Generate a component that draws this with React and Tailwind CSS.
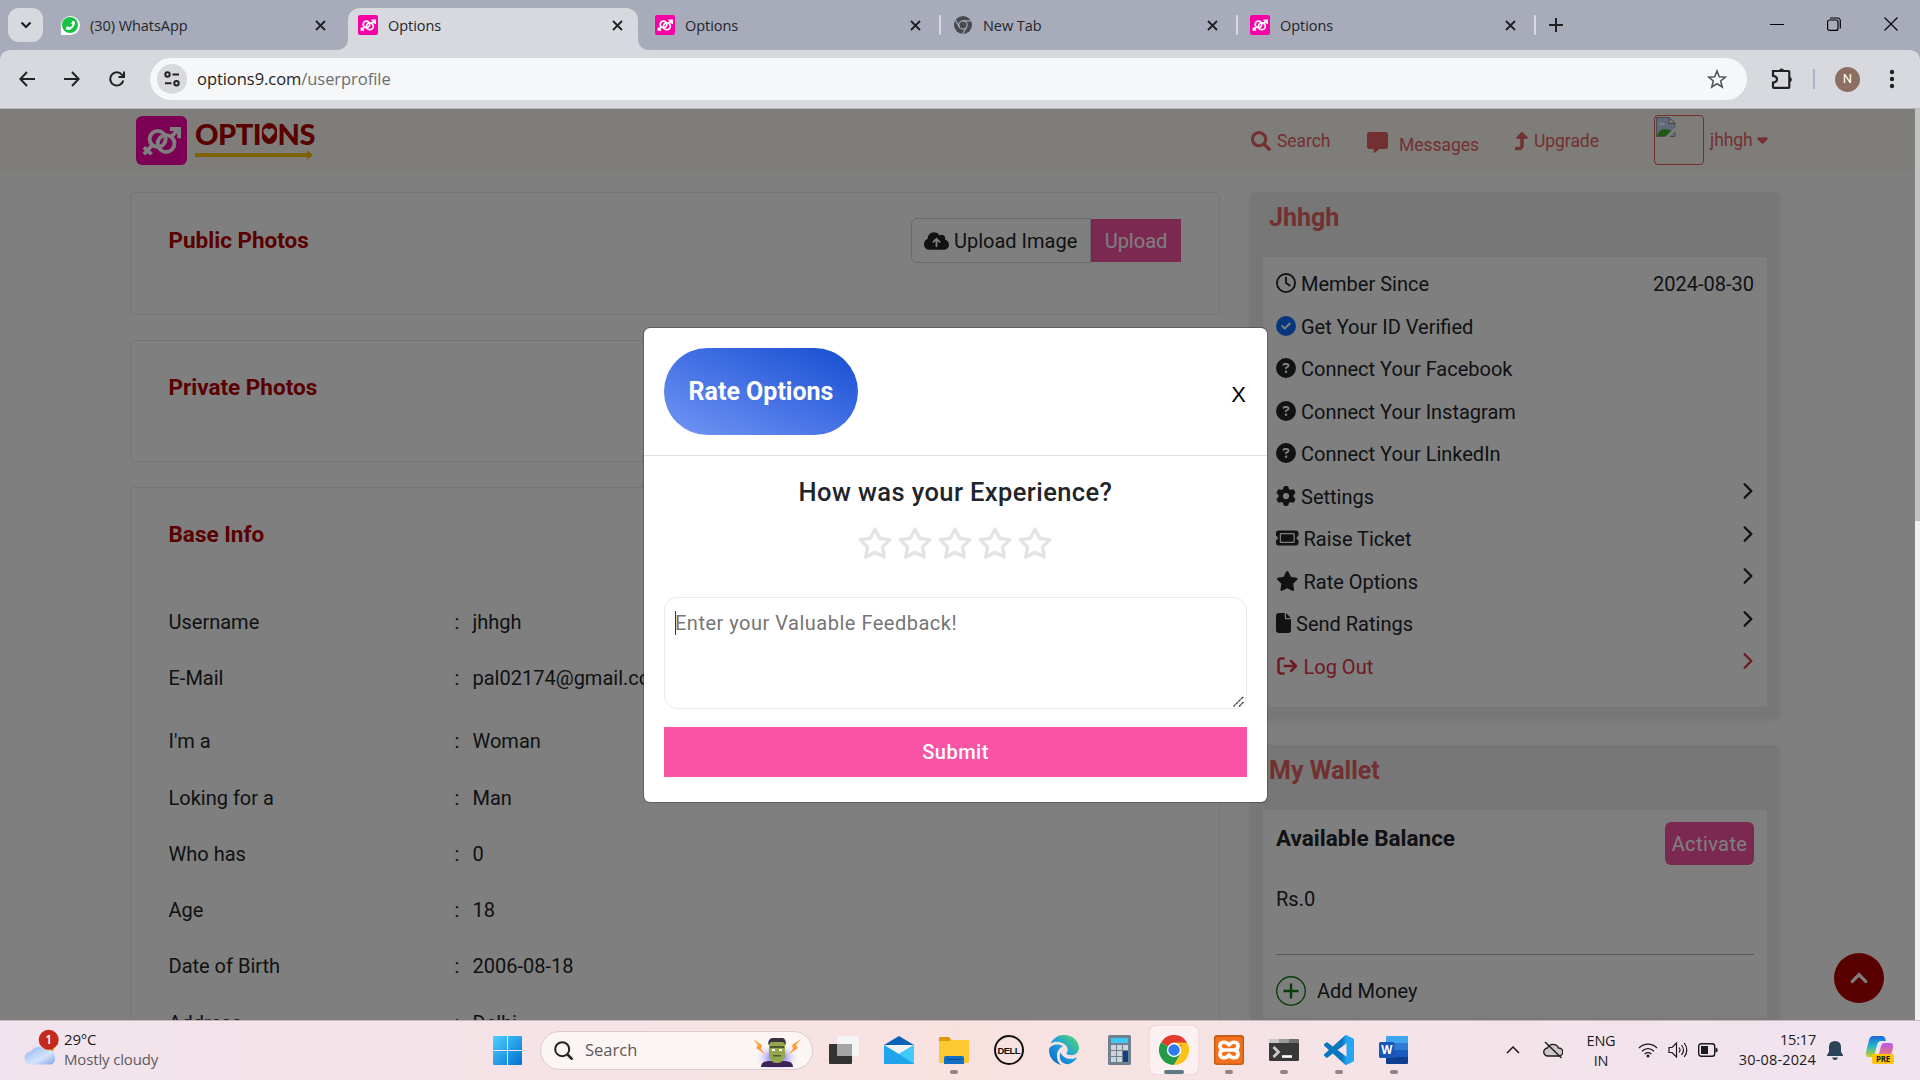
import React from "react";
import {
  FaMessage, FaTurnUp, FaCaretDown, FaCloudArrowUp, FaRegClock, FaCircleCheck,
  FaCircleQuestion, FaGear, FaTicket, FaStar, FaFile, FaArrowRightFromBracket, FaEdge, FaPhone,
} from "react-icons/fa6";
import { FaSearch, FaChevronUp } from "react-icons/fa";
import { BsChevronRight } from "react-icons/bs";

function Genders({ className, stroke = 4 }) {
  return (
    <svg viewBox="0 0 64 64" className={className} fill="none" stroke="currentColor" strokeWidth={stroke}>
      <circle cx="27" cy="30" r="10.5" />
      <circle cx="38" cy="36" r="11" />
      <path d="M20 38 9 50M9 41l10 9" />
      <path d="M45 27 54 17M43 17h12v12" />
    </svg>
  );
}

function Favicon() {
  return (
    <span className="flex size-5 items-center justify-center rounded-[2px] bg-[#f800a6] text-white">
      <Genders className="size-5" stroke={5.5} />
    </span>
  );
}

function ChromeGray() {
  return (
    <svg viewBox="0 0 20 20" className="size-[18px]">
      <circle cx="10" cy="10" r="10" fill="#474a4f" />
      <g stroke="#a8abb9" strokeWidth="1.3" fill="none">
        <path d="M10 5.4h9M6 12.3 1.6 4.6M14 12.3l-4.6 8" />
        <circle cx="10" cy="10" r="4.6" />
      </g>
    </svg>
  );
}

function WhatsApp() {
  return (
    <span className="flex size-[19px] items-center justify-center rounded-full rounded-bl-[4px] bg-white">
      <span className="flex size-[16px] items-center justify-center rounded-full bg-[#16c144]">
        <FaPhone className="size-[9px] -scale-x-100 text-white" />
      </span>
    </span>
  );
}

function Close({ className }) {
  return (
    <svg viewBox="0 0 11 11" className={className} fill="none" stroke="#1f2023" strokeWidth="1.8">
      <path d="m1 1 9 9M10 1 1 10" />
    </svg>
  );
}

function Tab({ icon, title, width, active, sep }) {
  return (
    <div className={"relative flex h-[42px] items-center pb-2 " + width + (active ? " rounded-t-[12px] bg-[#d8d9de]" : "")}>
      <span className="flex w-5 justify-center">{icon}</span>
      <span className="ml-[10px] mt-[2px] flex-1 text-[14.500px] tracking-[-0.050px] text-[#24262b]">{title}</span>
      <Close className="size-[11px]" />
      {sep && <span className="absolute -right-[20px] top-[7px] h-5 w-[2px] rounded bg-[#d8d9de]" />}
    </div>
  );
}

function TabStrip() {
  return (
    <div className="flex h-[50px] items-start bg-[#a8abb9] pt-2">
      <div className="ml-2 flex h-[34px] w-[35px] items-center justify-center rounded-[11px] bg-[#d8d9de]">
        <svg viewBox="0 0 12 8" className="h-[8px] w-[12px]" fill="none" stroke="#1f2023" strokeWidth="2.2"><path d="m1.5 1.5 4.5 4.5 4.5-4.5" /></svg>
      </div>
      <Tab icon={<WhatsApp />} title="(30) WhatsApp" width="ml-[17px] w-[266px]" />
      <svg viewBox="0 0 12 12" className="ml-[10px] size-3 self-end"><path d="M12 0v12H0Q12 12 12 0" fill="#d8d9de" /></svg>
      <Tab icon={<Favicon />} title="Options" width="w-[290px] pl-[10px] pr-[15px]" active />
      <svg viewBox="0 0 12 12" className="size-3 self-end"><path d="M0 0v12h12Q0 12 0 0" fill="#d8d9de" /></svg>
      <Tab icon={<Favicon />} title="Options" width="ml-[5px] w-[266px]" sep />
      <Tab icon={<ChromeGray />} title="New Tab" width="ml-[32px] w-[265px]" sep />
      <Tab icon={<Favicon />} title="Options" width="ml-[32px] w-[266px]" sep />
      <svg viewBox="0 0 14 14" className="ml-[33px] mt-[10px] size-[14px]" fill="none" stroke="#1f2023" strokeWidth="2"><path d="M7 0v14M0 7h14" /></svg>
      <div className="ml-auto mr-[22px] mt-[9px] flex items-center gap-[43px] text-black">
        <svg viewBox="0 0 14 14" className="size-[14px]" fill="none" stroke="currentColor"><path d="M0 7.500h14" /></svg>
        <svg viewBox="0 0 14 14" className="size-[14px]" fill="none" stroke="currentColor" strokeWidth="1.2"><rect x=".6" y="3" width="10.4" height="10.4" rx="2" /><path d="M3 1h7q3.300 0 3.300 3v7.500" /></svg>
        <svg viewBox="0 0 14 14" className="size-[14px]" fill="none" stroke="currentColor" strokeWidth="1.1"><path d="m.5.5 13 13M13.500.5l-13 13" /></svg>
      </div>
    </div>
  );
}

function Toolbar() {
  return (
    <div className="bg-[#a8abb9]">
      <div className="flex h-[59px] items-center rounded-t-[10px] border-b border-[#b3b5ba] bg-[#d8d9de] pl-[19px] text-[#202124]">
        <svg viewBox="0 0 16 16" className="size-4" fill="none" stroke="currentColor" strokeWidth="2"><path d="M16 8H1.500M8 1 1.300 8 8 15" /></svg>
        <svg viewBox="0 0 16 16" className="ml-[29px] size-4" fill="none" stroke="currentColor" strokeWidth="2"><path d="M0 8h14.500M8 1l6.700 7L8 15" /></svg>
        <svg viewBox="0 0 16 16" className="ml-[29px] size-4" fill="none" stroke="currentColor" strokeWidth="2"><path d="M14.300 9.500A6.600 6.600 0 1 1 13 3.800L14.800 6M15 .5V6H9.500" /></svg>
        <div className="ml-[25px] flex h-[42px] w-[1597px] items-center rounded-full bg-[#f5f7f9] pl-[7px]">
          <span className="flex size-[30px] items-center justify-center rounded-full bg-[#d8d9de]">
            <svg viewBox="0 0 16 16" className="size-4" fill="none" stroke="#202124" strokeWidth="2"><circle cx="3.500" cy="3.500" r="2.200" /><path d="M8.500 3.500H15M1 12.300h6.500" /><circle cx="12.500" cy="12.300" r="2.200" /></svg>
          </span>
          <span className="ml-[10px] mt-[1px] text-[16.500px] tracking-[-0.05px] text-[#1d1f23]">options9.com<span className="text-[#6b6e73]">/userprofile</span></span>
          <svg viewBox="0 0 20 20" className="ml-auto mr-5 size-5" fill="none" stroke="#55575b" strokeWidth="1.600"><path d="m10 2 2.300 5.700 6 .4-4.600 3.900 1.500 6-5.200-3.300L4.800 18l1.500-6-4.600-3.900 6-.4z" /></svg>
        </div>
        <svg viewBox="0 0 22 22" className="-mt-[2px] ml-[24px] size-[22px]" fill="none" stroke="#202124" strokeWidth="2.200"><path d="M2 4h15.500q.8 0 .8.800V20q0 .8-.8.800H3q-1 0-1-.8v-4.500q4-.5 4-3.300T2 8.800z" /><path d="M8 4a2.500 2.500 0 0 1 5 0zM18.300 10a2.500 2.500 0 0 1 0 5z" fill="#202124" stroke="none" /></svg>
        <span className="ml-[20px] h-5 w-[2px] bg-[#a9b3ca]" />
        <span className="ml-[20px] flex size-[25px] items-center justify-center rounded-full bg-[#8d6e63] font-['Roboto'] text-[13px] text-white">N</span>
        <svg viewBox="0 0 6 20" className="ml-[29px] h-5 w-[6px]" fill="#202124"><circle cx="3" cy="3" r="2.200" /><circle cx="3" cy="10" r="2.200" /><circle cx="3" cy="17" r="2.200" /></svg>
      </div>
    </div>
  );
}

function SiteNav() {
  return (
    <div className="flex h-[63px] items-start bg-[#fffbf5] pl-[136px] text-[17.500px] leading-[27px] tracking-[-0.050px] text-[#e66163]">
      <div className="mt-[7px] flex h-[49px] w-[51px] items-center justify-center rounded-[6px] bg-[#f800a6] text-white">
        <Genders className="size-[49px]" stroke={5} />
      </div>
      <div className="ml-[8px] mt-[12px] w-[120px] text-[#b30000]">
        <div className="flex h-[25px] items-center font-['Lato'] text-[29px] font-black leading-[25px] tracking-[-0.5px]">
          OPTI
          <span className="mx-[1px] flex h-[21px] w-[18px] items-center justify-center rounded-full bg-[#b30000]">
            <svg viewBox="0 0 12 11" className="h-[11px] w-3" fill="#fffbf5"><path d="M6 11 1 5.500C-1.500 2 3-2 6 1.500 9-2 13.500 2 11 5.500z" /></svg>
          </span>
          NS
        </div>
        <svg viewBox="0 0 118 10" className="mt-[4px] h-[10px] w-[118px]" fill="#f8c400"><path d="M0 3h112V0l6 5-6 5V7H0z" /></svg>
      </div>
      <div className="ml-auto mr-[144px] flex items-start">
        <FaSearch className="mt-[22px] size-[20px]" />
        <span className="ml-[6px] mt-[19px] w-[90px] whitespace-nowrap">Search</span>
        <FaMessage className="mt-[23px] size-[21px]" />
        <span className="ml-[11px] mt-[23px] w-[116px] whitespace-nowrap">Messages</span>
        <FaTurnUp className="mt-[22px] h-[20px] w-[14px]" />
        <span className="ml-[5px] mt-[19px] w-[120px] whitespace-nowrap">Upgrade</span>
        <span className="mt-[6px] flex size-[50px] items-start rounded-[4px] border border-[#e66163]">
          <svg viewBox="0 0 20 20" className="ml-[1px] mt-[1px] size-5"><path d="M.5.500h12.500l6 6V19.500H.5z" fill="#c3d4f4" stroke="#999" /><path d="M13 .5v6h6z" fill="#fff" stroke="#888" /><path d="M1 19q2-7 8-7 4 0 8 3l-4 4z" fill="#3fae2a" /><path d="M3 8q1-3 3-2 2-1 3 2z" fill="#fff" /><path d="M20 9.500 9 20h4l7-6.500z" fill="#fffbf5" /></svg>
        </span>
        <span className="ml-[6px] mt-[18px] w-[44px]">jhhgh</span>
        <FaCaretDown className="mt-[22px] size-[17px]" />
      </div>
    </div>
  );
}

const INFO = [
  ["Username", "jhhgh", "h-[56px]"],
  ["E-Mail", "pal02174@gmail.com", "h-[63px]"],
  ["I'm a", "Woman", "h-[57px]"],
  ["Loking for a", "Man", "h-[56px]"],
  ["Who has", "0", "h-[56px]"],
  ["Age", "18", "h-[56px]"],
  ["Date of Birth", "2006-08-18", "h-[57px]"],
  ["Address", "Delhi", "h-[56px]"],
];

function MainColumn() {
  const card = "rounded-[4px] border border-[#ebebeb] pl-[37.500px] ";
  const title = "text-[22.500px] font-bold leading-[30px] text-[#b30000]";
  return (
    <div className="flex w-[1090px] flex-col">
      <section className={card + "flex h-[123px] items-start justify-between pr-[38px]"}>
        <h2 className={title + " mt-[32px]"}>Public Photos</h2>
        <div className="mt-[25px] flex items-center text-[20px]">
          <span className="flex h-[45px] w-[180px] items-center rounded-l-[6px] border border-[#ced4da] pl-[12px] text-[#212529]">
            <FaCloudArrowUp className="h-[20px] w-[25px]" />
            <span className="ml-[5px] whitespace-nowrap">Upload Image</span>
          </span>
          <span className="flex h-[43px] w-[90px] items-center justify-center bg-[#f853a4] text-white">Upload</span>
        </div>
      </section>
      <section className={card + "mt-[25px] h-[122px]"}>
        <h2 className={title + " mt-[31px]"}>Private Photos</h2>
      </section>
      <section className={card + "mt-[25px] h-[700px]"}>
        <h2 className={title + " mt-[31px]"}>Base Info</h2>
        <div className="mt-[58px] text-[20px] leading-[30px]">
          {INFO.map(([k, v, h]) => (
            <div key={k} className={"flex " + h}>
              <span className="w-[286px]">{k}</span>
              <span className="w-[18px]">:</span>
              <span>{v}</span>
            </div>
          ))}
        </div>
      </section>
    </div>
  );
}

const MENU = [
  [<FaCircleQuestion className="size-5" />, "Connect Your Facebook"],
  [<FaCircleQuestion className="size-5" />, "Connect Your Instagram"],
  [<FaCircleQuestion className="size-5" />, "Connect Your LinkedIn"],
  [<FaGear className="size-5" />, "Settings", true],
  [<FaTicket className="h-5 w-[22.500px]" />, "Raise Ticket", true],
  [<FaStar className="h-5 w-[22.500px]" />, "Rate Options", true],
  [<FaFile className="h-5 w-[15px]" />, "Send Ratings", true],
];

function MenuRow({ icon, label, chevron, right, color = "" }) {
  return (
    <div className={"flex h-[42.500px] items-start leading-[30px] " + color}>
      <span className="mt-[4px] flex">{icon}</span>
      <span className="ml-[5px]">{label}</span>
      {right && <span className="ml-auto">{right}</span>}
      {chevron && <BsChevronRight className="-mr-[3px] ml-auto mt-[0.500px] size-[18px]" strokeWidth="1" />}
    </div>
  );
}

function SideColumn() {
  const card = "rounded-[6px] bg-[#eeeeee] px-[13px] shadow-[0_2px_10px_rgba(0,0,0,0.06)] ";
  const title = "pl-[6px] text-[25px] font-bold leading-[30px] text-[#e66163]";
  return (
    <div className="ml-[30px] flex w-[530px] flex-col">
      <section className={card + "h-[527px] pt-[11px]"}>
        <h2 className={title}>Jhhgh</h2>
        <div className="mt-[24px] h-[450px] bg-white px-[13px] pt-[12px] text-[20px]">
          <MenuRow icon={<FaRegClock className="size-5" />} label="Member Since" right="2024-08-30" />
          <MenuRow icon={<FaCircleCheck className="size-5 text-[#0d6efd]" />} label="Get Your ID Verified" />
          {MENU.map(([i, l, c]) => <MenuRow key={l} icon={i} label={l} chevron={c} />)}
          <MenuRow icon={<FaArrowRightFromBracket className="h-5 w-[22.500px]" />} label="Log Out" chevron color="text-[#dc3545]" />
        </div>
      </section>
      <section className={card + "mt-[26px] h-[400px] pt-[11px]"}>
        <h2 className={title}>My Wallet</h2>
        <div className="mt-[24px] h-[208px] bg-white px-[13px] pt-[12px] text-[20px]">
          <div className="flex h-[43px] items-start justify-between">
            <h3 className="mt-[1px] text-[22.500px] font-bold leading-[30px]">Available Balance</h3>
            <span className="flex h-[43px] w-[89px] items-center justify-center rounded-[6px] bg-[#f853a4] tracking-[0.4px] text-white">Activate</span>
          </div>
          <div className="mt-[19px] leading-[30px]">Rs.0</div>
          <div className="mt-[40px] h-[1px] bg-[#b4b5b6]" />
          <div className="mt-[21px] flex items-center">
            <svg viewBox="0 0 30 30" className="size-[30px]" fill="none" stroke="#0f7d0f"><circle cx="15" cy="15" r="14.300" strokeWidth="1.400" /><path d="M15 7.500v15M7.500 15h15" strokeWidth="2.400" /></svg>
            <span className="ml-[11px] leading-[30px]">Add Money</span>
          </div>
        </div>
      </section>
    </div>
  );
}

function RatingStar() {
  return (
    <svg viewBox="0 0 36 34" className="h-[34px] w-[36px]" fill="none" stroke="currentColor" strokeWidth="3.400" strokeLinejoin="round">
      <path d="m18 3 4.600 9.300 10.200 1.500-7.400 7.200 1.800 10.100L18 26.300l-9.200 4.800 1.800-10.100-7.400-7.200 10.200-1.500z" />
    </svg>
  );
}

function Modal() {
  return (
    <div className="flex h-[474px] w-[623px] flex-col rounded-[6px] bg-white text-[#212529] shadow-[0_0_0_1px_rgba(0,0,0,0.25)]">
      <div className="flex h-[128px] items-center justify-between border-b border-[#dee2e6] pl-5 pr-[21px]">
        <span className="flex h-[87px] w-[194px] items-center justify-center rounded-full bg-linear-to-tr from-[#7296f4] via-[#4471e4] to-[#144cd2] text-[25px] font-bold text-white">
          Rate Options
        </span>
        <span className="mt-[6px] font-['Liberation_Sans'] text-[22px] leading-none text-black">X</span>
      </div>
      <h2 className="mt-[21px] text-center text-[25.500px] font-medium leading-[30px] tracking-[0.400px]">How was your Experience?</h2>
      <div className="mt-[18px] flex h-[36px] items-center justify-center gap-[4px] pr-[1px] text-[#e4e4e4]">
        {[0, 1, 2, 3, 4].map((n) => <RatingStar key={n} />)}
      </div>
      <div className="relative mx-5 mt-[36px] h-[112px] rounded-[13px] border border-[#e9e9e9] pl-[10px] pt-[11px] text-[20px] leading-[28px] tracking-[0.500px] text-[#757575]">
        Enter your Valuable Feedback!
        <span className="absolute left-[10px] top-[13px] h-6 w-[1px] bg-[#b30000]" />
        <svg viewBox="0 0 11 11" className="absolute bottom-[1px] right-[2px] size-[11px]" fill="none" stroke="#444" strokeWidth="1.300"><path d="m.5 10.500 10-10M6 10.500l4.500-4.500" strokeDasharray="3 .5" /></svg>
      </div>
      <div className="mx-5 mt-[18px] flex h-[50px] items-center justify-center bg-[#f853a4] text-[20px] font-medium tracking-[0.500px] text-white">Submit</div>
    </div>
  );
}

function Page() {
  return (
    <div className="flex h-[911px]">
      <div className="relative w-[1915px] overflow-hidden bg-white font-['Roboto',sans-serif] text-[#212529]">
        <SiteNav />
        <div className="flex pl-[130px] pt-[20px]">
          <MainColumn />
          <SideColumn />
        </div>
        <div className="absolute left-[1834px] top-[844px] flex size-[50px] items-center justify-center rounded-full bg-[#b30000] text-white">
          <FaChevronUp className="size-5" />
        </div>
        <div className="absolute inset-0 flex items-start justify-center bg-black/50 pr-[4px] pt-[219px]">
          <Modal />
        </div>
      </div>
      <div className="w-[5px] bg-[#f1f1f1]"><div className="h-[412px] bg-[#c1c1c1]" /></div>
    </div>
  );
}

function Weather() {
  return (
    <div className="flex w-[250px] items-center pl-6">
      <svg viewBox="0 0 36 38" className="-mt-[6px] h-[38px] w-[36px]">
        <defs><linearGradient id="cl" x1="0" y1="0" x2="1" y2="1"><stop offset="0" stopColor="#8db0ee" /><stop offset=".6" stopColor="#d5e4fb" /><stop offset="1" stopColor="#7ea3e8" /></linearGradient></defs>
        <circle cx="25" cy="20" r="5" fill="#f08a20" />
        <path d="M7 36.500a6.500 6.500 0 0 1 0-13 9 9 0 0 1 15-1.500 7 7 0 0 1 9 7.500 6 6 0 0 1-4 7z" fill="url(#cl)" />
        <circle cx="24.700" cy="11.700" r="10" fill="#c42b1c" />
        <text x="24.700" y="16" textAnchor="middle" fontSize="12" fontWeight="600" fill="#fff" fontFamily="Open Sans">1</text>
      </svg>
      <div className="-mt-[2px] ml-[4px] text-[15px] leading-[20px] text-[#1b1b1b]">
        <div className="tracking-[-0.200px]">29°C</div>
        <div className="tracking-[-0.150px] text-[#5d5a5e]">Mostly cloudy</div>
      </div>
    </div>
  );
}

function Slot({ children, open, active }) {
  return (
    <div className={"relative flex h-12 w-12 items-center justify-center rounded-[5px] " + (active ? "bg-[#fcf1f0] shadow-[0_0_1px_rgba(0,0,0,0.3)]" : "")}>
      {children}
      {open && <span className="absolute bottom-0 left-5 h-[4px] w-2 rounded-full bg-[#8f8586]" />}
      {active && <span className="absolute bottom-0 left-[14px] h-[4px] w-5 rounded-full bg-[#5f7886]" />}
    </div>
  );
}

function Taskbar() {
  return (
    <div className="flex h-[60px] items-center border-t border-[#c9b9bc] bg-linear-to-r from-[#f1e4ee] via-[#f8e2e0] to-[#f0e4f0] pb-[1px]">
      <Weather />
      <svg viewBox="0 0 29 29" className="ml-[243px] size-[29px]">
        <defs><linearGradient id="wn" x1="0" y1="0" x2="1" y2="1"><stop offset="0" stopColor="#4fd0ff" /><stop offset="1" stopColor="#0070d0" /></linearGradient></defs>
        <path d="M1 0h13v14H0V1q0-1 1-1M15 0h13q1 0 1 1v13H15zM0 15h14v14H1q-1 0-1-1zM15 15h14v13q0 1-1 1H15z" fill="url(#wn)" />
      </svg>
      <div className="ml-[18px] flex h-[39px] w-[273px] items-center rounded-full border border-[#dccbcc] bg-[#fbf5f4] pl-[13px] pr-[10px]">
        <svg viewBox="0 0 19 19" className="size-[19px]" fill="none" stroke="#222" strokeWidth="2"><circle cx="8.200" cy="8.200" r="7" /><path d="m13 13 5.500 5.500" strokeWidth="2.600" /></svg>
        <span className="ml-[12px] mt-[1px] text-[16.500px] text-[#5c595b]">Search</span>
        <svg viewBox="0 0 50 32" className="ml-auto mt-[3px] h-[32px] w-[50px]">
          <defs><radialGradient id="gl"><stop offset=".4" stopColor="#a9a5ff" /><stop offset="1" stopColor="#fbf5f4" stopOpacity="0" /></radialGradient></defs>
          <ellipse cx="25" cy="22" rx="22" ry="15" fill="url(#gl)" />
          <path d="M9 31q0-6 8-6h16q8 0 8 6z" fill="#3d2454" />
          <path d="M17 6h16v15q-2 6-8 6t-8-6z" fill="#93a84c" />
          <path d="M16 9q0-6 4-7h11q3 1 3 7l-3-3H19z" fill="#3b3040" />
          <path d="M18 10h14v2H18zM21 19h8v1.500h-8z" fill="#4c5a2c" />
          <path d="m20 13 3 0v2h-3zM27 13h3v2h-3z" fill="#fff" />
          <path d="m1 3 9 6-1 4 5 6-10-7 2-3zM49 3l-9 6 1 4-5 6 10-7-2-3z" fill="#ff9d3c" />
        </svg>
      </div>
      <div className="ml-[7px] flex items-center gap-[7px]">
        <Slot>
          <svg viewBox="0 0 30 28" className="h-[28px] w-[30px]"><rect y="8" width="23" height="20" rx="1" fill="#333" /><rect x="8" width="22" height="20" rx="1" fill="#f4f4f4" opacity=".95" /><rect x="8" y="8" width="15" height="12" fill="#a5a5a5" /></svg>
        </Slot>
        <Slot>
          <svg viewBox="0 0 30 28" className="h-[28px] w-[30px]"><path d="M0 9 15 0l15 9z" fill="#0b63b8" /><path d="M2 9h26v7L15 22 2 15z" fill="#f2f2f4" /><path d="M0 9l15 9 15-9v19H0z" fill="#1fa3ea" /><path d="M30 9 15 18l15 10z" fill="#3ecbf7" /></svg>
        </Slot>
        <Slot open>
          <svg viewBox="0 0 30 28" className="h-[28px] w-[30px]"><path d="M0 7V2q0-1 1-1h9l3 4z" fill="#dc9a06" /><path d="M0 5h10l2-1h17q1 0 1 1v22H0z" fill="#fdc930" /><path d="M5 28v-6q0-2 2-2h16q2 0 2 2v6z" fill="#0f6fc4" /><path d="M8 23.500h14" stroke="#0a4a8c" /></svg>
        </Slot>
        <Slot>
          <svg viewBox="0 0 30 30" className="size-[30px]"><circle cx="15" cy="15" r="14" fill="none" stroke="#111" strokeWidth="2" /><text x="15" y="18.500" textAnchor="middle" fontSize="9.500" fontWeight="700" fill="#111" textLength="23" fontFamily="Liberation Sans">DELL</text></svg>
        </Slot>
        <Slot>
          <svg className="absolute size-0"><defs><linearGradient id="ed" x1="0" y1="1" x2="1" y2="0"><stop offset="0" stopColor="#0b62c0" /><stop offset=".5" stopColor="#1e9fdf" /><stop offset="1" stopColor="#58e05a" /></linearGradient></defs></svg>
          <FaEdge className="size-[30px]" fill="url(#ed)" />
        </Slot>
        <Slot>
          <svg viewBox="0 0 23 30" className="h-[30px] w-[23px]"><rect width="23" height="30" rx="1.500" fill="#70808c" /><rect x="3" y="3" width="17" height="5" fill="#3cc8f4" /><path d="M3 10h5v5H3zM9 10h5v5H9zM15 10h5v5h-5zM3 16h5v5H3zM9 16h5v5H9zM3 22h5v5H3zM9 22h5v5H9z" fill="#cdd5da" /><path d="M15 16h5v11h-5z" fill="#103f82" /></svg>
        </Slot>
        <Slot active>
          <svg viewBox="0 0 48 48" className="size-[30px]">
            <path d="M24 24 3.200 12A24 24 0 0 1 44.800 12z" fill="#e33b2e" />
            <path d="M24 24 3.200 12A24 24 0 0 0 24 48l10.400-18z" fill="#239a47" />
            <path d="M24 12h20.800A24 24 0 0 1 24 48l10.400-18z" fill="#fcc21b" />
            <path d="M24 12h20.800L24 24z" fill="#e33b2e" /><path d="M24 12.500h21q1 2 1.500 4H32z" fill="#fcc21b" />
            <circle cx="24" cy="24" r="11.500" fill="#fff" /><circle cx="24" cy="24" r="9.200" fill="#2f7bf2" />
          </svg>
        </Slot>
        <Slot open>
          <svg viewBox="0 0 30 30" className="size-[30px]"><rect width="30" height="30" rx="3" fill="#c65f16" /><rect x="1.500" y="2" width="27" height="26.500" rx="2" fill="#f3711d" /><path d="M12.500 15H10q-4 .5-4 4t3.500 3.700Q13 23 15 20q2 3 5.500 2.700T24 19t-4-4q4-.5 4-4t-3.500-3.700Q17 7 15 10q-2-3-5.500-2.700T6 11t4 4h10" fill="none" stroke="#fff" strokeWidth="3.600" strokeLinejoin="round" /></svg>
        </Slot>
        <Slot open>
          <svg viewBox="0 0 30 22" className="h-[22px] w-[30px]"><rect width="30" height="22" rx="1.500" fill="#383838" /><path d="M0 4V1q0-1 1-1h9v4z" fill="#c8c8c8" /><path d="M10 0h10v4H10z" fill="#999" /><path d="M20 0h9q1 0 1 1v3H20z" fill="#6e6e6e" /><path d="m4.500 8 5 5-5 5" fill="none" stroke="#ccc" strokeWidth="2.800" /><path d="M13 17.500h10" stroke="#fff" strokeWidth="2.600" /></svg>
        </Slot>
        <Slot open>
          <svg viewBox="0 0 24 24" className="size-[30px]">
            <defs><linearGradient id="vs" x1="0" y1="0" x2="1" y2="0"><stop offset=".6" stopColor="#0a77bf" /><stop offset=".76" stopColor="#23a5f2" /></linearGradient></defs>
            <path fill="url(#vs)" d="M23.150 2.587L18.210.21a1.494 1.494 0 0 0-1.705.29l-9.460 8.630-4.120-3.128a.999.999 0 0 0-1.276.057L.327 7.261A1 1 0 0 0 .326 8.740L3.899 12 .326 15.260a1 1 0 0 0 .001 1.479L1.650 17.940a.999.999 0 0 0 1.276.057l4.120-3.128 9.460 8.630a1.492 1.492 0 0 0 1.704.29l4.942-2.377A1.500 1.500 0 0 0 24 20.060V3.939a1.500 1.500 0 0 0-.85-1.352zm-5.146 14.861L10.826 12l7.178-5.448v10.896z" />
          </svg>
        </Slot>
        <Slot open>
          <svg viewBox="0 0 30 28" className="h-[28px] w-[30px]"><path d="M7 1q0-1 1-1h20q1 0 1 1v6H7z" fill="#41a5ee" /><path d="M7 7h22v7H7z" fill="#2b7cd3" /><path d="M7 14h22v7H7z" fill="#185abd" /><path d="M7 21h22v6q0 1-1 1H8q-1 0-1-1z" fill="#103f91" /><rect y="6" width="15.500" height="16" rx="1.500" fill="#1a56b4" /><text x="7.700" y="18" textAnchor="middle" fontSize="11.500" fontWeight="700" fill="#fff" fontFamily="Open Sans">W</text></svg>
        </Slot>
      </div>
      <div className="ml-auto flex items-center pr-[25px] text-[14.500px] leading-[20px] tracking-[-0.200px] text-[#1b1b1b]">
        <svg viewBox="0 0 14 8" className="h-2 w-[14px]" fill="none" stroke="#1b1b1b" strokeWidth="1.500"><path d="m1 7 6-6 6 6" /></svg>
        <svg viewBox="0 0 20 18" className="ml-[23px] h-[18px] w-5" fill="none" stroke="#1b1b1b" strokeWidth="1.400"><path d="M5 15a4 4 0 0 1-.5-8A6 6 0 0 1 15.500 7a4 4 0 0 1 .5 8z" fill="#cfc6c6" /><path d="m2 1 16.500 16" /></svg>
        <div className="ml-[23px] mt-[1px] w-[30px] text-center"><div>ENG</div><div>IN</div></div>
        <svg viewBox="0 0 20 16" className="ml-[22px] h-[16px] w-5" fill="none" stroke="#1b1b1b" strokeWidth="1.300"><path d="M1 6a12.500 12.500 0 0 1 18 0M4 9.200a8.500 8.500 0 0 1 12 0M6.800 12a4.700 4.700 0 0 1 6.400 0" /><circle cx="10" cy="14" r="1.500" fill="#1b1b1b" stroke="none" /></svg>
        <svg viewBox="0 0 20 16" className="ml-[10px] h-[16px] w-5" fill="none" stroke="#1b1b1b" strokeWidth="1.200"><path d="M1 5.500h3L8.500 1v14L4 10.500H1zM11 5.500q2 2.500 0 5M13.500 3q4 5 0 10M16.300 1q5 7 0 14" /></svg>
        <svg viewBox="0 0 20 14" className="ml-[10px] h-[14px] w-5"><rect x=".7" y=".7" width="16" height="12.600" rx="2.500" fill="none" stroke="#1b1b1b" strokeWidth="1.400" /><path d="M3 3h7v8H3zM17.500 4.500q2.300.5 2.300 2.500t-2.300 2.500z" fill="#1b1b1b" /></svg>
        <div className="ml-[18px] w-[80px] whitespace-nowrap text-right tracking-[0.150px]"><div className="tracking-[-0.200px]">15:17</div><div>30-08-2024</div></div>
        <svg viewBox="0 0 16 19" className="ml-[11px] h-[19px] w-4" fill="#2d4357"><path d="M8 0q6 0 6 6v5l2 3v1H0v-1l2-3V6q0-6 6-6M5 16.500h6q-1 2.500-3 2.500t-3-2.500" /></svg>
        <svg viewBox="0 0 30 30" className="ml-[22px] size-[30px]">
          <defs><linearGradient id="cp" x1="0" y1="0" x2="0" y2="1"><stop offset="0" stopColor="#1769e0" /><stop offset=".5" stopColor="#26b8c4" /><stop offset="1" stopColor="#d3cf1f" /></linearGradient><linearGradient id="cq" x1="0" y1="0" x2="0" y2="1"><stop offset="0" stopColor="#b05be8" /><stop offset="1" stopColor="#ff7a62" /></linearGradient></defs>
          <path d="M8 1h9q3 0 4 5h-5q-3 0-4 4l-2 8q-1 4-4 4H4q-4 0-3-5l3-12Q5 1 8 1" fill="url(#cp)" />
          <path d="M19 8h6q4 0 3 5l-2 7q-1 3-4 3H10q3 0 4-4l2-8q1-3 3-3" fill="url(#cq)" />
          <rect x="7" y="19" width="22" height="10" rx="2" fill="#fdc60a" />
          <text x="18" y="27" textAnchor="middle" fontSize="8" fontWeight="700" fill="#222" fontFamily="Open Sans">PRE</text>
        </svg>
      </div>
    </div>
  );
}

export default function App() {
  return (
    <div className="flex h-[1080px] w-[1920px] flex-col overflow-hidden bg-white font-['Open_Sans','Noto_Sans',sans-serif]">
      <TabStrip />
      <Toolbar />
      <Page />
      <Taskbar />
    </div>
  );
}
